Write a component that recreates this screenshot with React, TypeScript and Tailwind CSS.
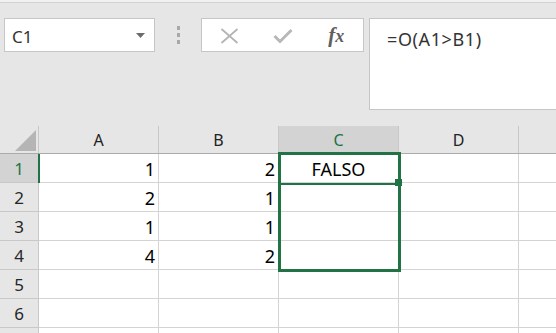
import React from "react";

const font = { fontFamily: '"Noto Sans", "Open Sans", sans-serif' };

const cols = ["A", "B", "C", "D", ""];

const data: (string | null)[][] = [
  ["1", "2", "FALSO", null, null],
  ["2", "1", null, null, null],
  ["1", "1", null, null, null],
  ["4", "2", null, null, null],
  [null, null, null, null, null],
  [null, null, null, null, null],
  [null, null, null, null, null],
];

export default function App() {
  return (
    <div
      className="w-[556px] h-[333px] overflow-hidden bg-[#e6e6e6] flex flex-col text-[#222]"
      style={font}
    >
      {/* top band */}
      <div className="h-[2px] bg-[#f1f1f1] border-b border-[#d2d2d2] box-content shrink-0" />

      {/* formula bar row */}
      <div className="flex items-start mt-[15px] shrink-0">
        <div className="ml-[4px] w-[151px] h-[34px] bg-white border border-[#c6c6c6] flex items-center justify-between pl-[7px] pr-[9px]">
          <span className="text-[17px] leading-none text-[#333] mt-[2px]">C1</span>
          <svg width="9" height="5" viewBox="0 0 9 5" className="mt-[1px]">
            <polygon points="0,0 9,0 4.5,5" fill="#6b6b6b" />
          </svg>
        </div>
        <div className="w-[46px] h-[34px] flex flex-col items-center justify-center gap-[3px] pl-[1px]">
          <div className="w-[3px] h-[4px] bg-[#a8a8a8]" />
          <div className="w-[3px] h-[4px] bg-[#a8a8a8]" />
          <div className="w-[3px] h-[4px] bg-[#a8a8a8]" />
        </div>
        <div className="w-[163px] h-[34px] bg-white border border-[#c6c6c6] flex items-center">
          <div className="w-[54px] flex justify-center pl-[1px] mt-[1px]">
            <svg width="19" height="16" viewBox="0 0 19 16">
              <path d="M1.5 1 L17.5 15 M17.5 1 L1.5 15" stroke="#b3b3b3" strokeWidth="1.7" fill="none" />
            </svg>
          </div>
          <div className="w-[54px] flex justify-center mt-[1px]">
            <svg width="20" height="16" viewBox="0 0 20 16">
              <path d="M1.5 8 L7 13.5 L18.5 2" stroke="#b8b8b8" strokeWidth="3" fill="none" />
            </svg>
          </div>
          <div className="w-[54px] flex justify-center">
            <span
              className="text-[21px] leading-none italic text-[#5f5f5f] font-bold"
              style={{ fontFamily: '"Liberation Serif", "DejaVu Serif", serif' }}
            >
              f<span className="text-[18px]">x</span>
            </span>
          </div>
        </div>
        <div className="ml-[5px] flex-1 mr-[-4px] h-[92px] bg-white border border-[#c6c6c6] pl-[17px] pt-[7px]">
          <span className="text-[18px] tracking-[0.6px] text-[#333]">=O(A1&gt;B1)</span>
        </div>
      </div>

      {/* grid */}
      <div className="relative mt-[16px] bg-white flex-1">
        {/* header row */}
        <div className="flex h-[28px] bg-[#e6e6e6] border-b border-[#ababab]">
          <div className="w-[39px] shrink-0 border-r border-[#c8c8c8] relative">
            <svg width="22" height="22" viewBox="0 0 22 22" className="absolute left-[15px] top-[4px]">
              <polygon points="21,0 21,21 0,21" fill="#b5b5b5" />
            </svg>
          </div>
          {cols.map((c, i) => (
            <div
              key={i}
              className={`w-[120px] shrink-0 border-r border-[#c8c8c8] flex items-center justify-center text-[16px] pt-[1px] ${
                c === "C" ? "bg-[#d3d3d3] text-[#217346]" : "text-[#222]"
              }`}
            >
              {c}
            </div>
          ))}
        </div>

        {/* rows */}
        {data.map((row, r) => (
          <div key={r} className="flex h-[29px]">
            <div
              className={`w-[39px] shrink-0 border-r border-b border-[#c8c8c8] flex items-center justify-center text-[17px] pt-[1px] ${
                r === 0 ? "bg-[#d3d3d3] text-[#217346]" : "bg-[#e6e6e6] text-[#262626]"
              }`}
            >
              {r < 6 ? r + 1 : null}
            </div>
            {row.map((v, i) => (
              <div
                key={i}
                className={`w-[120px] shrink-0 border-r border-b border-[#d4d4d4] flex items-center text-[18px] text-black pt-[2px] ${
                  i === 2 ? "justify-center" : "justify-end pr-[3px]"
                }`}
              >
                {v}
              </div>
            ))}
          </div>
        ))}

        {/* row 1 header green edge */}
        <div className="absolute left-[38px] top-[28px] w-[2px] h-[29px] bg-[#217346]" />

        {/* selection */}
        <div className="absolute left-[278px] top-[26px] w-[123px] h-[120px] border-[3px] border-[#217346]" />
        <div className="absolute left-[280px] top-[57px] w-[118px] h-[2px] bg-[#217346]" />
        <div className="absolute left-[395px] top-[53px] w-[7px] h-[7px] bg-[#217346]" />
      </div>
    </div>
  );
}
